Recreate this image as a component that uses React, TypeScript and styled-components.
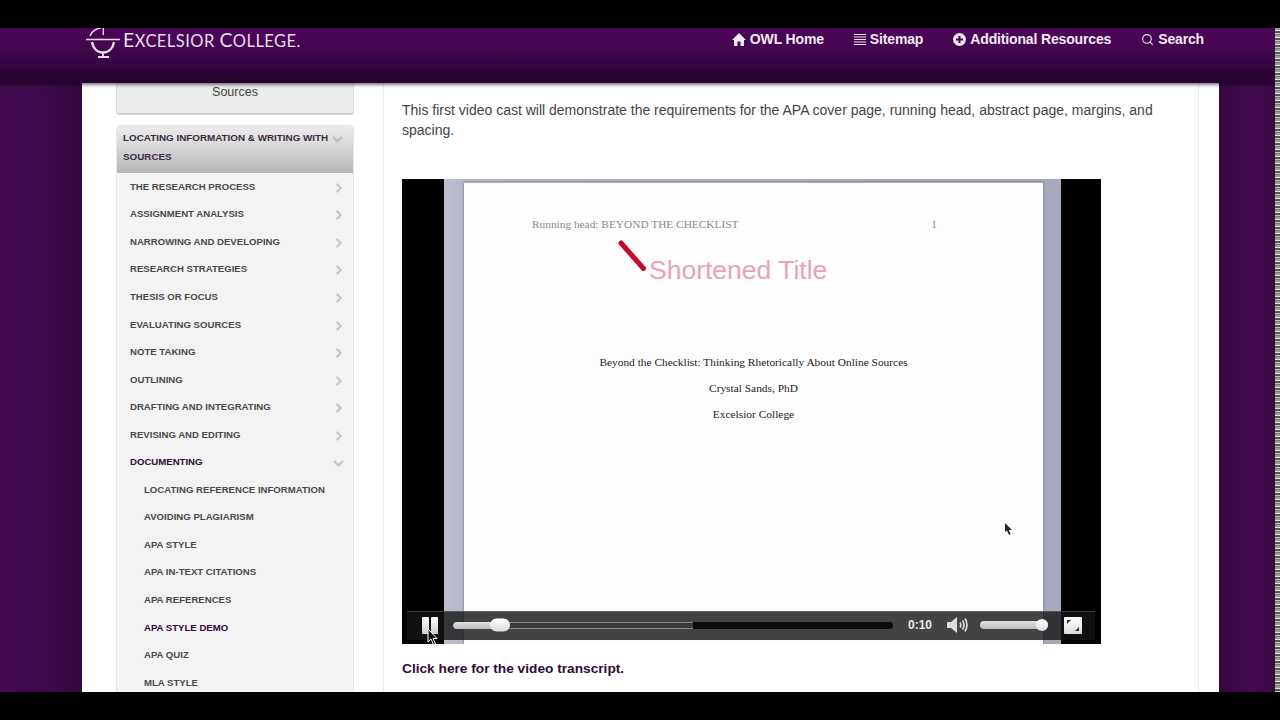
import React from 'react';
import styled, { createGlobalStyle } from 'styled-components';
import { ChevronDown, ChevronRight, Search } from 'lucide-react';

const GlobalStyle = createGlobalStyle`
  html, body {
    margin: 0;
    padding: 0;
    height: 720px;
    overflow: hidden;
    background: #000;
    font-family: "Liberation Sans", Arial, sans-serif;
  }
`;

const Screen = styled.div`
  width: 1280px;
  height: 720px;
  display: flex;
  flex-direction: column;
  background: #000;
`;

const LetterBox = styled.div`
  flex: 0 0 28px;
  background: #000;
`;

const Middle = styled.div`
  height: 664px;
  display: flex;
`;

const Stage = styled.div`
  flex: 1;
  display: flex;
  flex-direction: column;
  overflow: hidden;
  background: linear-gradient(90deg, #42094f 0, #400a4d 40px, #36073f 82px, #36073f 1219px, #440a50 1250px, #3a0845 1275px);
`;

const NoiseStrip = styled.div`
  flex: 0 0 5px;
  background: repeating-linear-gradient(180deg, #9a9a9a 0, #9a9a9a 2px, #e4e4e4 2px, #e4e4e4 3px, #555 3px, #555 5px, #c4c4c4 5px, #c4c4c4 6px, #777 6px, #777 7px);
`;

const Header = styled.header`
  flex: 0 0 55px;
  box-sizing: border-box;
  display: flex;
  justify-content: space-between;
  padding: 0 71px 0 86px;
  background: linear-gradient(180deg, #4c0558 0, #43064f 20px, #340540 40px, #2b0436 41px, #2a0335 54px, #1c0224 55px);
  box-shadow: 0 2px 3px rgba(0, 0, 0, 0.5);
  position: relative;
  z-index: 2;
`;

const Logo = styled.div`
  display: flex;
  align-items: flex-start;
  gap: 3px;
  height: 31px;
  overflow: hidden;
`;

const LogoWord = styled.span`
  font-family: Lato, "Liberation Sans", sans-serif;
  font-size: 16.5px;
  line-height: 24px;
  letter-spacing: 0.45px;
  color: #e9dcec;
  white-space: nowrap;
`;

const LogoInitial = styled.span`
  font-size: 19.5px;
`;

const Nav = styled.nav`
  display: flex;
  gap: 30px;
  padding-top: 3px;
`;

const NavLink = styled.a`
  display: flex;
  align-items: center;
  gap: 4px;
  height: 16px;
  font-size: 14px;
  font-weight: 700;
  letter-spacing: -0.15px;
  color: #f2e9f3;
  white-space: nowrap;
`;

const Wrapper = styled.div`
  flex: 1;
  margin-left: 82px;
  width: 1137px;
  box-sizing: border-box;
  background: #fff;
  display: grid;
  grid-template-columns: 238px 816px;
  column-gap: 29px;
  padding-left: 34px;
  overflow: hidden;
`;

const Sidebar = styled.aside`
  display: flex;
  flex-direction: column;
  gap: 10px;
`;

const SourcesCard = styled.div`
  height: 32px;
  box-sizing: border-box;
  padding-top: 1px;
  background: #ececec;
  border: 1px solid #dcdcdc;
  border-top: 0;
  border-bottom: 2px solid #cfcfcf;
  border-radius: 0 0 4px 4px;
  text-align: center;
  font-size: 12.5px;
  line-height: 16px;
  color: #444;
`;

const Menu = styled.div`
  background: #f3f3f3;
  border: 1px solid #e6e6e6;
  border-radius: 4px 4px 0 0;
`;

const MenuHead = styled.div`
  height: 46.5px;
  box-sizing: border-box;
  position: relative;
  padding: 2px 20px 0 6px;
  background: linear-gradient(180deg, #ececec 0, #dcdcdc 35%, #b6b6b6 100%);
  font-size: 9.85px;
  font-weight: 700;
  line-height: 19px;
  color: #3d2a44;
`;

const HeadChevron = styled.span`
  position: absolute;
  right: 8px;
  top: 6px;
  color: #c0c0c0;
`;

const MenuRow = styled.div<{ $depth: number; $active?: boolean }>`
  height: 27.55px;
  display: flex;
  align-items: center;
  justify-content: space-between;
  padding: 0 7px 0 ${(p) => (p.$depth === 1 ? 27 : 13)}px;
  font-size: 9.6px;
  font-weight: 700;
  white-space: nowrap;
  color: ${(p) => (p.$active ? '#2f0a3a' : '#4a4a4a')};
`;

const RowIcon = styled.span`
  display: flex;
  margin-top: 3px;
  color: #c8c8c8;
`;

const Content = styled.main`
  border-left: 1px solid #ececec;
  border-right: 1px solid #ececec;
  padding: 16.5px 0 0 18px;
  font-size: 14px;
  color: #444;
`;

const Intro = styled.p`
  margin: 0;
  width: 770px;
  line-height: 20px;
`;

const Player = styled.div`
  position: relative;
  margin-top: 39.5px;
  width: 699px;
  height: 465px;
  box-sizing: border-box;
  padding-left: 42px;
  background: #000;
`;

const SlideFrame = styled.div`
  width: 617px;
  height: 465px;
  box-sizing: border-box;
  overflow: hidden;
  padding: 3px 18px 0 20px;
  background: linear-gradient(90deg, #bcc0cd, #b4b7c6 20px, #a6a9bb 579px);
`;

const Slide = styled.div`
  height: 100%;
  position: relative;
  background: #fdfdfd;
  border-top: 1px solid #aeaeb2;
  box-shadow: 0 0 2px rgba(60, 60, 70, 0.6);
  font-family: "Liberation Serif", serif;
  color: #222;
`;

const SlideHeader = styled.div`
  position: absolute;
  left: 68px;
  right: 106px;
  top: 34px;
  display: flex;
  justify-content: space-between;
  font-size: 11.35px;
  line-height: 14px;
  color: #8b8b8b;
`;

const Callout = styled.div`
  position: absolute;
  left: 154px;
  top: 57px;
  display: flex;
  align-items: flex-start;
  gap: 3px;
`;

const CalloutText = styled.span`
  margin-top: 15px;
  font-family: "Liberation Sans", Arial, sans-serif;
  font-size: 26.5px;
  line-height: 30px;
  color: #e8a3b8;
`;

const TitleBlock = styled.div`
  position: absolute;
  left: 0;
  right: 0;
  top: 172px;
  display: flex;
  flex-direction: column;
  gap: 12px;
  text-align: center;
  font-size: 11.4px;
  line-height: 14px;
`;

const SlidePointer = styled.svg`
  position: absolute;
  left: 540px;
  top: 339px;
`;

const Controls = styled.div`
  position: absolute;
  left: 5px;
  right: 6px;
  bottom: 4px;
  height: 29px;
  box-sizing: border-box;
  display: flex;
  align-items: center;
  padding: 0 0 2px 15px;
  background: rgba(20, 20, 20, 0.8);
  border-top: 1px solid rgba(255, 255, 255, 0.18);
`;

const PauseButton = styled.div`
  display: flex;
  gap: 2px;
  margin-right: 15px;
`;

const PauseBar = styled.span`
  width: 7px;
  height: 17px;
  border-radius: 1px;
  background: linear-gradient(180deg, #fff, #ccc);
`;

const Cursor = styled.svg`
  position: absolute;
  left: 20px;
  top: 16px;
`;

const Track = styled.div`
  position: relative;
  width: 440px;
  height: 7px;
  border-radius: 4px;
  background: #0c0c0c;
  overflow: hidden;
`;

const Buffered = styled.div`
  height: 100%;
  box-sizing: border-box;
  background: #3a3a3a;
  border-top: 1px solid #8a8a8a;
  border-bottom: 1px solid #8a8a8a;
`;

const Played = styled.div`
  position: absolute;
  left: 0;
  top: 0;
  height: 100%;
  border-radius: 4px;
  background: linear-gradient(180deg, #e2e2e2, #bbb);
`;

const Thumb = styled.div<{ $width: number; $left: number; $height: number }>`
  position: absolute;
  left: ${(p) => p.$left}px;
  top: 50%;
  transform: translateY(-50%);
  width: ${(p) => p.$width}px;
  height: ${(p) => p.$height}px;
  border-radius: 7px;
  background: linear-gradient(180deg, #fff, #ddd);
`;

const TrackHolder = styled.div`
  position: relative;
  display: flex;
  align-items: center;
`;

const Time = styled.span`
  margin-left: 15px;
  font-size: 12px;
  font-weight: 700;
  color: #eee;
  font-family: "Liberation Sans", Arial, sans-serif;
`;

const VolumeIcon = styled.svg`
  margin-left: 15px;
`;

const VolumeHolder = styled.div`
  position: relative;
  margin-left: 11px;
  width: 68px;
  height: 8px;
  border-radius: 4px;
  background: linear-gradient(180deg, #e2e2e2, #bbb);
`;

const FullscreenButton = styled.svg`
  margin-left: 16px;
`;

const TranscriptLink = styled.a`
  display: block;
  margin-top: 16px;
  font-size: 13.7px;
  font-weight: 700;
  line-height: 18px;
  color: #2f0a3a;
`;

const LogoMark = () => (
  <svg width="34" height="31" viewBox="0 0 34 31" fill="none" stroke="#eadfec" strokeWidth="1.4">
    <path d="M0 11.500 H34" />
    <path d="M4 8 C6 3 10 0.500 15 0" />
    <path d="M17.300 0 V7" />
    <path d="M6 14 C7 20 11 24.500 17 24.500 C23 24.500 27 20 28 14" strokeWidth="2.400" />
    <path d="M17 25 V28 M12 29 H23" strokeWidth="1.800" />
  </svg>
);

const HomeIcon = () => (
  <svg width="14" height="13" viewBox="0 0 14 13" fill="#f2e9f3">
    <path d="M7 0 L14 7 H12 V13 H8.500 V8.500 H5.500 V13 H2 V7 H0 Z" />
  </svg>
);

const ListIcon = () => (
  <svg width="12" height="12" viewBox="0 0 12 12" stroke="#f2e9f3" strokeWidth="1">
    <path d="M0 1.500 H12 M0 4 H12 M0 6.500 H12 M0 9 H12 M0 11.500 H12" />
  </svg>
);

const PlusCircleIcon = () => (
  <svg width="13" height="13" viewBox="0 0 13 13">
    <circle cx="6.500" cy="6.500" r="6.500" fill="#f2e9f3" />
    <path d="M6.500 3 V10 M3 6.500 H10" stroke="#43064f" strokeWidth="2" />
  </svg>
);

const topItems = [
  'THE RESEARCH PROCESS',
  'ASSIGNMENT ANALYSIS',
  'NARROWING AND DEVELOPING',
  'RESEARCH STRATEGIES',
  'THESIS OR FOCUS',
  'EVALUATING SOURCES',
  'NOTE TAKING',
  'OUTLINING',
  'DRAFTING AND INTEGRATING',
  'REVISING AND EDITING',
];

const subItems = [
  'LOCATING REFERENCE INFORMATION',
  'AVOIDING PLAGIARISM',
  'APA STYLE',
  'APA IN-TEXT CITATIONS',
  'APA REFERENCES',
  'APA STYLE DEMO',
  'APA QUIZ',
  'MLA STYLE',
];

const App: React.FC = () => {
  return (
    <Screen>
      <GlobalStyle />
      <LetterBox />
      <Middle>
        <Stage>
          <Header>
            <Logo>
              <LogoMark />
              <LogoWord>
                <LogoInitial>E</LogoInitial>XCELSIOR <LogoInitial>C</LogoInitial>OLLEGE.
              </LogoWord>
            </Logo>
            <Nav>
              <NavLink>
                <HomeIcon />
                OWL Home
              </NavLink>
              <NavLink>
                <ListIcon />
                Sitemap
              </NavLink>
              <NavLink>
                <PlusCircleIcon />
                Additional Resources
              </NavLink>
              <NavLink>
                <Search size={13} color="#f2e9f3" strokeWidth={2} />
                Search
              </NavLink>
            </Nav>
          </Header>
          <Wrapper>
            <Sidebar>
              <SourcesCard>Sources</SourcesCard>
              <Menu>
                <MenuHead>
                  LOCATING INFORMATION &amp; WRITING WITH SOURCES
                  <HeadChevron>
                    <ChevronDown size={15} strokeWidth={4} />
                  </HeadChevron>
                </MenuHead>
                {topItems.map((item) => (
                  <MenuRow key={item} $depth={0}>
                    {item}
                    <RowIcon>
                      <ChevronRight size={14} strokeWidth={4} />
                    </RowIcon>
                  </MenuRow>
                ))}
                <MenuRow $depth={0} $active>
                  DOCUMENTING
                  <RowIcon>
                    <ChevronDown size={15} strokeWidth={4} />
                  </RowIcon>
                </MenuRow>
                {subItems.map((item) => (
                  <MenuRow key={item} $depth={1} $active={item === 'APA STYLE DEMO'}>
                    {item}
                  </MenuRow>
                ))}
              </Menu>
            </Sidebar>
            <Content>
              <Intro>
                This first video cast will demonstrate the requirements for the APA cover page, running head, abstract
                page, margins, and spacing.
              </Intro>
              <Player>
                <SlideFrame>
                  <Slide>
                    <SlideHeader>
                      <span>Running head: BEYOND THE CHECKLIST</span>
                      <span>1</span>
                    </SlideHeader>
                    <Callout>
                      <svg width="28" height="32" viewBox="0 0 28 32">
                        <path d="M3 3 L25.500 28.500" stroke="#c40a2a" strokeWidth="5" strokeLinecap="round" />
                      </svg>
                      <CalloutText>Shortened Title</CalloutText>
                    </Callout>
                    <TitleBlock>
                      <span>Beyond the Checklist: Thinking Rhetorically About Online Sources</span>
                      <span>Crystal Sands, PhD</span>
                      <span>Excelsior College</span>
                    </TitleBlock>
                    <SlidePointer width="9" height="14" viewBox="0 0 9 14">
                      <path d="M1 1 V10 L3 8.500 L5 13 L6.500 12 L4.800 8 H8 Z" fill="#222" />
                    </SlidePointer>
                  </Slide>
                </SlideFrame>
                <Controls>
                  <PauseButton>
                    <PauseBar />
                    <PauseBar />
                  </PauseButton>
                  <Cursor width="12" height="18" viewBox="0 0 12 18">
                    <path d="M1 1 V14 L4 11 L6.500 16.500 L8.500 15.500 L6 10.500 H10 Z" fill="#111" stroke="#fff" strokeWidth="1" />
                  </Cursor>
                  <TrackHolder>
                    <Track>
                      <Buffered style={{ width: `${(240 / 440) * 100}%` }} />
                      <Played style={{ width: `${(47 / 440) * 100}%` }} />
                    </Track>
                    <Thumb $width={20} $left={37} $height={13} />
                  </TrackHolder>
                  <Time>0:10</Time>
                  <VolumeIcon width="22" height="18" viewBox="0 0 22 18" fill="none">
                    <path d="M0 6 H4 L10 1 V17 L4 12 H0 Z" fill="#ddd" />
                    <path d="M13 6.500 Q14.500 9 13 11.500 M15.500 4.500 Q18.500 9 15.500 13.500 M18 2.500 Q22 9 18 15.500" stroke="#ddd" strokeWidth="1.700" />
                  </VolumeIcon>
                  <VolumeHolder>
                    <Thumb $width={12} $left={56} $height={12} />
                  </VolumeHolder>
                  <FullscreenButton width="18" height="17" viewBox="0 0 18 17">
                    <defs>
                      <linearGradient id="fullscreenFill" x1="0" y1="0" x2="0" y2="1">
                        <stop offset="0" stopColor="#fff" />
                        <stop offset="1" stopColor="#ddd" />
                      </linearGradient>
                    </defs>
                    <rect width="18" height="17" rx="1" fill="url(#fullscreenFill)" />
                    <path d="M3 3 H7 L3 7 Z M15 14 H11 L15 10 Z" fill="#333" />
                  </FullscreenButton>
                </Controls>
              </Player>
              <TranscriptLink>Click here for the video transcript.</TranscriptLink>
            </Content>
          </Wrapper>
        </Stage>
        <NoiseStrip />
      </Middle>
      <LetterBox />
    </Screen>
  );
};

export default App;
